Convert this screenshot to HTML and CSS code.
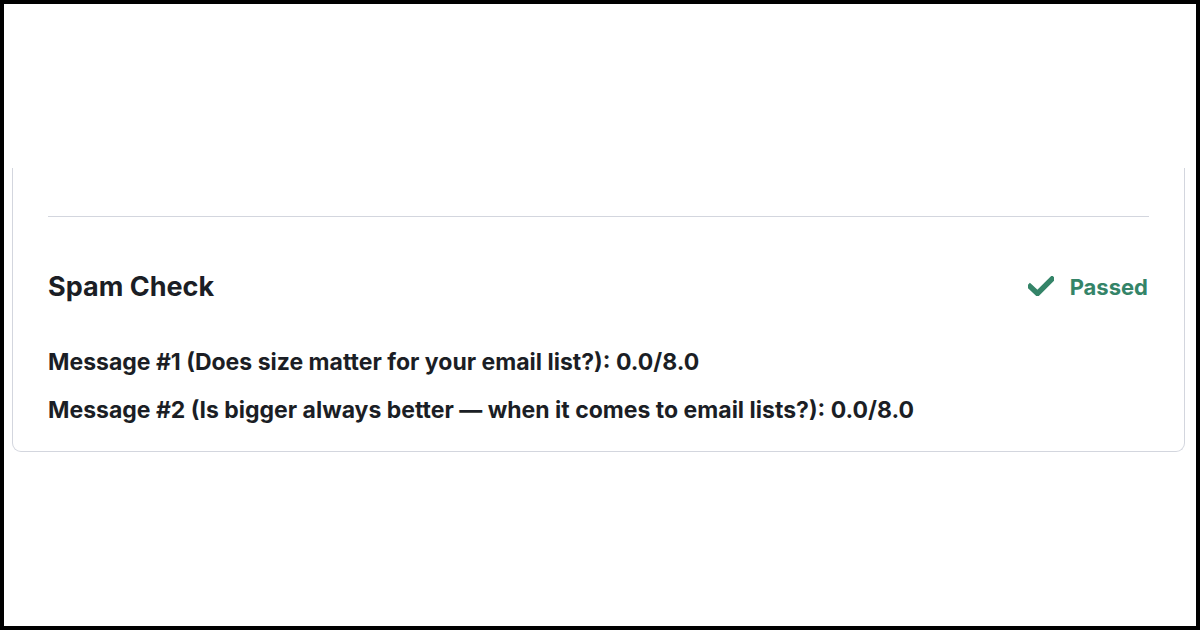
FILE: index.html
```html
<!DOCTYPE html>
<html lang="en">
<head>
    <meta charset="UTF-8">
    <meta name="viewport" content="width=device-width, initial-scale=1.0">
    <title>Spam Check</title>
    <link rel="stylesheet" href="styles.css">
</head>
<body>
    <div class="frame">
        <div class="card">
            <div class="divider"></div>
            <div class="check-header">
                <h2>Spam Check</h2>
                <span class="status">
                    <svg class="tick" width="26" height="20" viewBox="0 0 26 20">
                        <path d="M2 10.5 L9.5 17.5 L24 3" fill="none" stroke="currentColor" stroke-width="5.4" stroke-linecap="square" stroke-linejoin="miter"/>
                    </svg>
                    Passed
                </span>
            </div>
            <p class="score">Message #1 (Does size matter for your email list?): 0.0/8.0</p>
            <p class="score">Message #2 (Is bigger always better — when it comes to email lists?): 0.0/8.0</p>
        </div>
    </div>
</body>
</html>
```

FILE: styles.css
```css
html, body {
    margin: 0;
    padding: 0;
    background: #fff;
}
body {
    font-family: Inter, "Noto Sans", sans-serif;
    color: #1b1e25;
}
.frame {
    box-sizing: border-box;
    width: 1200px;
    height: 630px;
    border: 4px solid #000;
    padding: 164px 11px 0 8px;
}
.card {
    border: 1px solid #d3d6de;
    border-top: none;
    border-radius: 0 0 9px 9px;
    padding: 48px 35px 25px;
}
.divider {
    height: 1px;
    background: #d3d6de;
}
.check-header {
    display: flex;
    justify-content: space-between;
    align-items: center;
    margin-top: 53px;
    margin-bottom: 43px;
}
.check-header h2 {
    margin: 0;
    font-size: 27px;
    font-weight: 700;
    line-height: 34px;
}
.status {
    display: flex;
    align-items: center;
    gap: 16px;
    margin-right: 1px;
    color: #348468;
    font-size: 22px;
    font-weight: 700;
}
.tick {
    margin-top: -2px;
}
.score {
    margin: 0 0 17px;
    font-size: 23px;
    font-weight: 700;
    line-height: 31px;
}
.score:last-child {
    margin-bottom: 0;
}
```
